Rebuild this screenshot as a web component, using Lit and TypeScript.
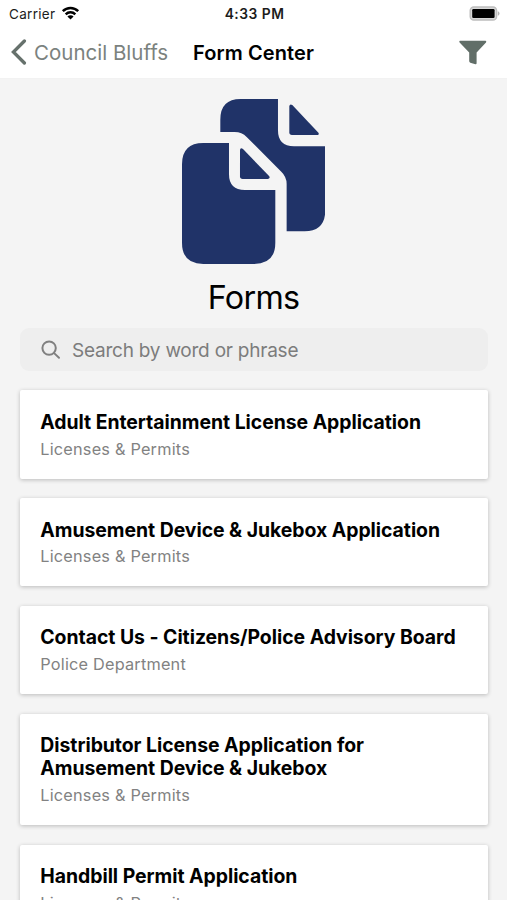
import { LitElement, html, css, svg } from "lit";
import { customElement, property } from "lit/decorators.js";

interface FormEntry {
  title: string;
  category: string;
}

const FORMS: FormEntry[] = [
  { title: "Adult Entertainment License Application", category: "Licenses & Permits" },
  { title: "Amusement Device & Jukebox Application", category: "Licenses & Permits" },
  { title: "Contact Us - Citizens/Police Advisory Board", category: "Police Department" },
  { title: "Distributor License Application for Amusement Device & Jukebox", category: "Licenses & Permits" },
  { title: "Handbill Permit Application", category: "Licenses & Permits" },
];

const wifiArcs = svg`
  <path d="M1.3 5.2a11 11 0 0 1 15.4 0" />
  <path d="M4.2 8.3a6.9 6.9 0 0 1 9.6 0" />`;

@customElement("status-bar")
export class StatusBar extends LitElement {
  static styles = css`
    :host {
      display: grid;
      grid-template-columns: 1fr auto 1fr;
      align-items: center;
      height: 27px;
      padding: 0 7px 0 9px;
      font-size: 13.5px;
      color: #1c1c1c;
    }
    .carrier { display: flex; align-items: center; gap: 6px; letter-spacing: 0.3px; }
    .wifi { width: 19px; height: 14px; margin-top: -1px; }
    .arcs { fill: none; stroke: #000; stroke-width: 2.5; }
    .time { font-weight: 600; font-size: 13.8px; letter-spacing: 0.5px; }
    .battery { justify-self: end; width: 31px; height: 15px; margin-top: -1px; }
  `;
  render() {
    return html`
      <div class="carrier">
        <span>Carrier</span>
        <svg class="wifi" viewBox="0 0 18 14">
          <g class="arcs">${wifiArcs}</g>
          <path d="M9 13.6 L5.9 10.5 a4.4 4.4 0 0 1 6.2 0 Z" />
        </svg>
      </div>
      <div class="time">4:33 PM</div>
      <svg class="battery" viewBox="0 0 31 15">
        <rect x="1.2" y="1" width="26.4" height="13" rx="3.6" fill="#d8d8d8" stroke="#bdbdbd" stroke-width="1.4" />
        <rect x="3.2" y="3" width="22.4" height="9" rx="1.2" />
        <path d="M28.8 5.2 a2.4 2.4 0 0 1 0 4.6 Z" fill="#b4b4b4" />
      </svg>
    `;
  }
}

@customElement("nav-bar")
export class NavBar extends LitElement {
  static styles = css`
    :host {
      display: flex;
      align-items: center;
      height: 51px;
      padding: 0 20px 0 10px;
    }
    .chevron { width: 17px; height: 26px; margin: -1px 7px 0 0; }
    .back { width: 159px; font-size: 20.5px; color: #7b827e; white-space: nowrap; }
    .title { flex: 1; font-size: 20px; font-weight: 600; letter-spacing: 0.1px; color: #000; white-space: nowrap; }
    .filter { width: 28px; height: 25px; margin-top: -1px; }
  `;
  render() {
    return html`
      <svg class="chevron" viewBox="0 0 17 26">
        <path d="M14.4 2 L3.4 13 L14.4 24" fill="none" stroke="#66716c" stroke-width="3.3" stroke-linecap="round" />
      </svg>
      <div class="back">Council Bluffs</div>
      <div class="title">Form Center</div>
      <svg class="filter" viewBox="0 0 28 25">
        <path d="M1 0.8 H26.4 Q27.7 0.9 27 2.4 L17.6 12.6 V23.2 Q17.6 24.4 16.4 24.2 L11.3 22.7 Q10.2 22.2 10.2 21 V12.6 L0.6 2.4 Q-0.1 0.9 1 0.8 Z" fill="#616e68" />
      </svg>
    `;
  }
}

@customElement("form-card")
export class FormCard extends LitElement {
  @property() heading = "";
  @property() category = "";
  static styles = css`
    :host {
      display: block;
      padding: 20.6px 20px 20.6px;
      background: #fff;
      border-radius: 2px;
      box-shadow: 0 1px 4px rgba(0, 0, 0, 0.24);
    }
    .heading { max-width: 420px; font-size: 19.4px; line-height: 23.3px; font-weight: 650; letter-spacing: -0.03px; color: #000; }
    .category { margin-top: 5.5px; font-size: 16.3px; line-height: 18.5px; color: #828282; letter-spacing: 0.2px; }
  `;
  render() {
    return html`
      <div class="heading">${this.heading}</div>
      <div class="category">${this.category}</div>
    `;
  }
}

@customElement("app-root")
export class AppRoot extends LitElement {
  static styles = css`
    :host {
      display: flex;
      flex-direction: column;
      height: 900px;
      overflow: hidden;
      background: #f4f4f4;
      font-family: Inter, "Liberation Sans", sans-serif;
    }
    .top { flex: none; background: #fff; box-shadow: 0 0 1px rgba(0, 0, 0, 0.06); }
    .hero { flex: none; display: flex; flex-direction: column; align-items: center; padding-top: 21.3px; }
    .docs { width: 143.3px; height: 165px; fill: #203368; }
    .name { height: 40px; margin-top: 13.7px; font-size: 32.3px; letter-spacing: -0.7px; line-height: 40px; color: #000; }
    .search {
      flex: none;
      display: flex;
      align-items: center;
      height: 43.5px;
      margin: 10px 19.5px 18.7px 20px;
      padding: 1px 0 0 21px;
      gap: 11px;
      box-sizing: border-box;
      border-radius: 9px;
      background: #eee;
      font-size: 19px;
      letter-spacing: -0.23px;
      color: #7c7c7c;
    }
    .lens { width: 20px; height: 20px; margin-top: -1px; fill: none; stroke: #808080; stroke-width: 2; stroke-linecap: round; }
    .list { display: flex; flex-direction: column; gap: 19.3px; padding: 0 19.3px 0 20.3px; }
  `;
  render() {
    return html`
      <div class="top">
        <status-bar></status-bar>
        <nav-bar></nav-bar>
      </div>
      <div class="hero">
        <svg class="docs" viewBox="36 43 430 495">
          <path d="M212 43 H324 V137 Q324 185 372 185 H466 V376 Q466 440 404 440 H350 V298 Q350 276 334 261 L230 157 Q216 142 194 142 H151 V105 Q151 43 212 43 Z" />
          <path d="M358 64 Q360 56 367 61 L446 145 Q448 151 441 151 H366 Q358 151 358 143 Z" />
          <path d="M100 175 H177 V268 Q177 316 225 316 H316 V474 Q316 538 252 538 H100 Q36 538 36 474 V239 Q36 175 100 175 Z" />
          <path d="M210 196 Q211 188 219 193 L298 275 Q301 283 293 283 H218 Q210 283 210 275 Z" />
        </svg>
        <div class="name">Forms</div>
      </div>
      <div class="search">
        <svg class="lens" viewBox="0 0 20 20">
          <circle cx="8.1" cy="8.1" r="6.7" />
          <path d="M13.1 13.1 L18 17.8" />
        </svg>
        <span>Search by word or phrase</span>
      </div>
      <div class="list">
        ${FORMS.map((f) => html`<form-card .heading=${f.title} .category=${f.category}></form-card>`)}
      </div>
    `;
  }
}
